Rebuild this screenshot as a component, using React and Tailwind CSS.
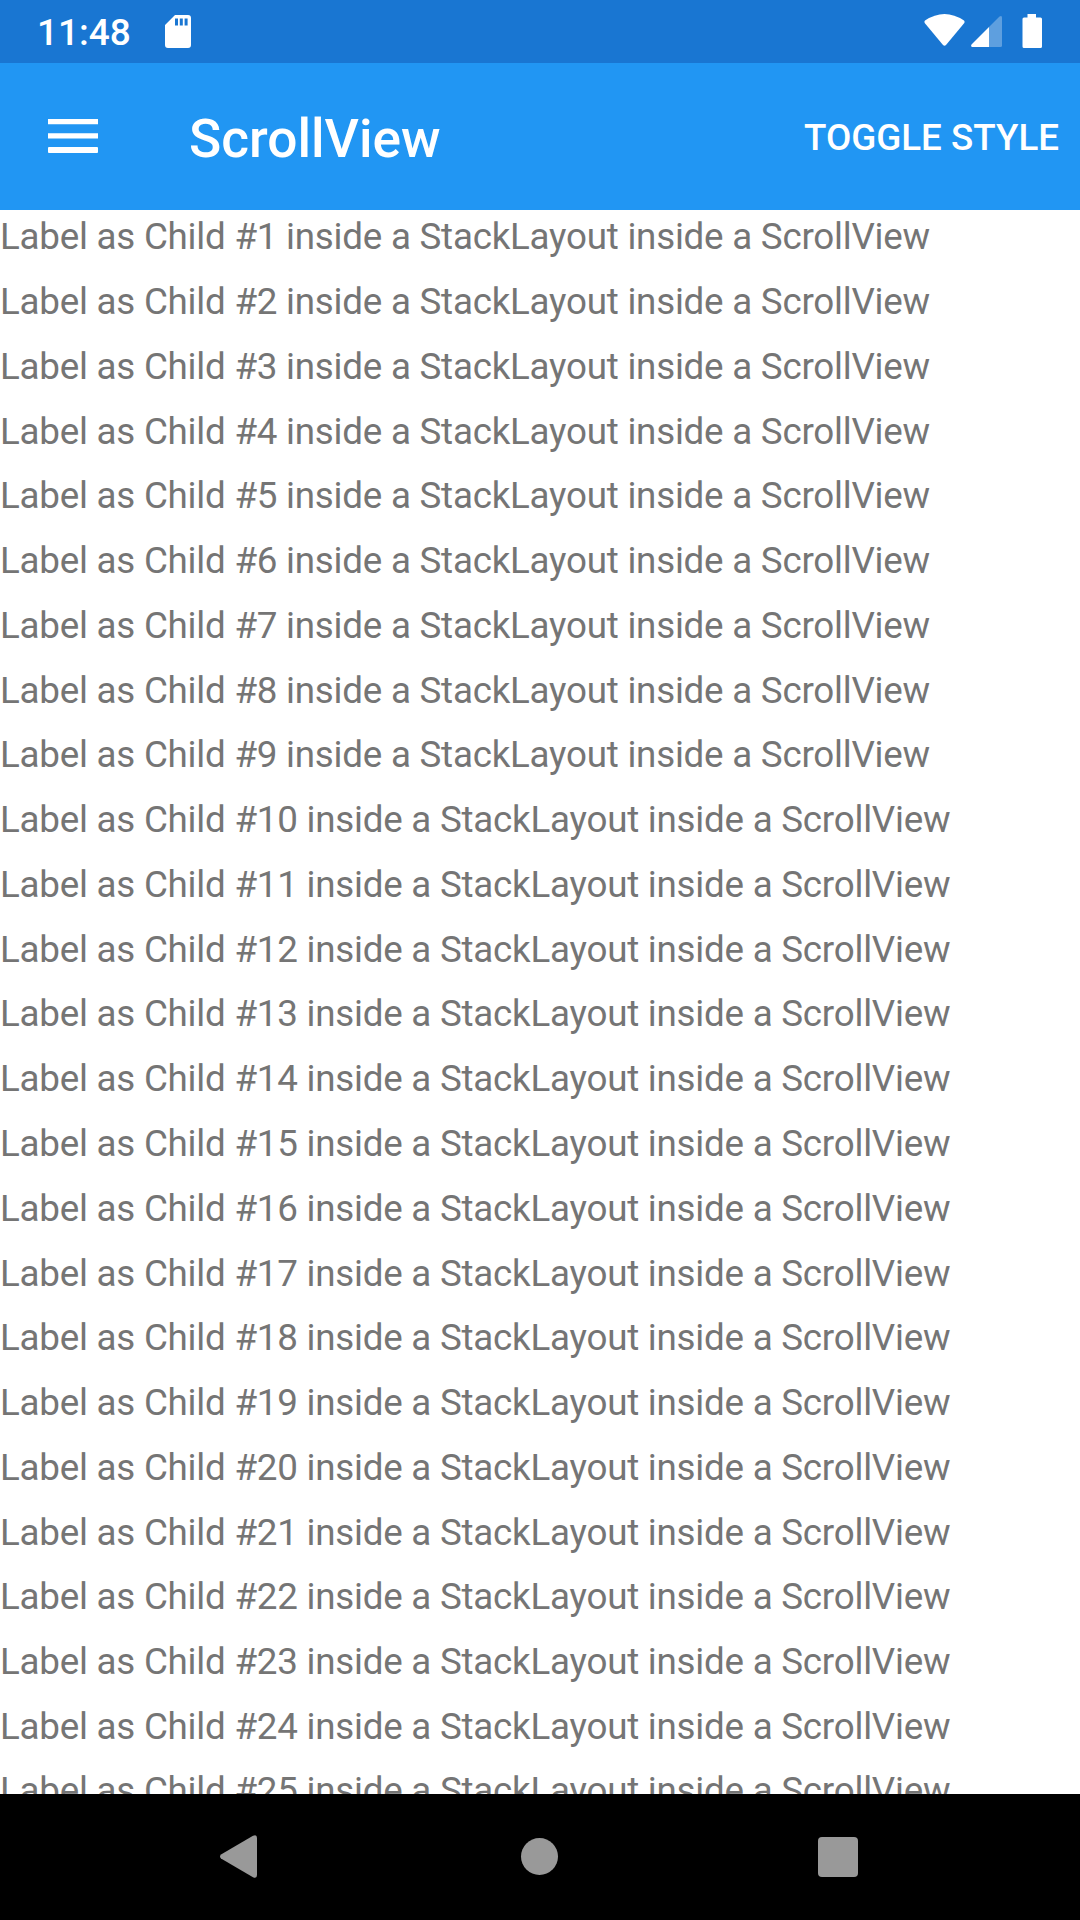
const labels = Array.from({ length: 25 }, (_, i) => i + 1);

function StatusBar() {
  return (
    <div className="flex h-[63px] shrink-0 items-start bg-[#1976d2] text-white">
      <span className="mt-px ml-[37px] w-[94px] text-[37px] leading-[63px] font-medium">11:48</span>
      <svg className="mt-[15px] ml-[34px]" width="26" height="33" viewBox="0 0 26 33" fill="currentColor">
        <path fillRule="evenodd" d="M10 0H23Q26 0 26 3V30Q26 33 23 33H3Q0 33 0 30V10ZM10 3.5V10.5H13V3.5ZM14.8 3.5V10.5H17.8V3.5ZM19.6 3.5V10.5H22.6V3.5Z" />
      </svg>
      <svg className="mt-[14px] ml-auto" width="41" height="32" viewBox="0 0 41 32" fill="currentColor">
        <path d="M1 6.5Q20.500 -6.500 40 6.500Q41 7.500 40.300 9L22 31Q20.500 32.500 19 31L0.700 9Q0 7.500 1 6.500Z" />
      </svg>
      <svg className="mt-[15px] ml-[6px]" width="31" height="32" viewBox="0 0 31 32" fill="currentColor">
        <path opacity=".3" d="M18 12L28.500 1.500Q31 0 31 2.500V30.500Q31 32 29.500 32H18Z" />
        <path d="M18 12V32H1Q-.5 31.500 .5 29.500Z" />
      </svg>
      <svg className="mt-[14px] mr-[38.5px] ml-[19.5px]" width="20" height="34" viewBox="0 0 20 34" fill="currentColor">
        <path d="M5.500 0H14V3.500H18.500Q20 3.500 20 5V32.500Q20 34 18.500 34H2Q.5 34 .5 32.500V5Q.5 3.500 2 3.500H5.500Z" />
      </svg>
    </div>
  );
}

export default function App() {
  return (
    <div className="flex h-[1920px] w-[1080px] flex-col overflow-hidden bg-white font-['Roboto',sans-serif]">
      <StatusBar />
      <header className="flex h-[147px] shrink-0 items-center bg-[#2196f3] text-white">
        <svg className="mb-px ml-[48px]" width="50" height="34" viewBox="0 0 50 34" fill="currentColor">
          <path d="M0 0H50V5.300H0ZM0 14.200H50V19.500H0Z" />
          <rect y="28" width="50" height="6" rx="1" />
        </svg>
        <h1 className="mt-[5px] ml-[91px] text-[53.25px] leading-[62px] font-medium">ScrollView</h1>
        <button className="mt-[2px] mr-[21px] ml-auto text-[36.75px] leading-[43px] font-medium">TOGGLE STYLE</button>
      </header>
      <main className="min-h-0 flex-1 overflow-hidden text-[36.75px] leading-[43px] tracking-[-0.235px] whitespace-nowrap text-[#757575]">
        <div className="flex flex-col gap-[21.766px] pt-[5.29px]">
          {labels.map((n) => (
            <p key={n} className="last:-mt-[0.25px]">
              Label as Child #{n} inside a StackLayout inside a ScrollView
            </p>
          ))}
        </div>
      </main>
      <nav className="flex h-[126px] shrink-0 items-center bg-black text-[#999]">
        <svg className="mb-px ml-[220px]" width="37" height="43" viewBox="0 0 37 43" fill="currentColor">
          <path d="M1 19.500L33 .8Q37 -1 37 3V40Q37 44 33 42.200L1 23.500Q-1 21.500 1 19.500Z" />
        </svg>
        <div className="mb-px ml-[264px] size-[37px] rounded-full bg-[#999]" />
        <div className="ml-[260px] size-[40px] rounded-[4px] bg-[#999]" />
      </nav>
    </div>
  );
}
